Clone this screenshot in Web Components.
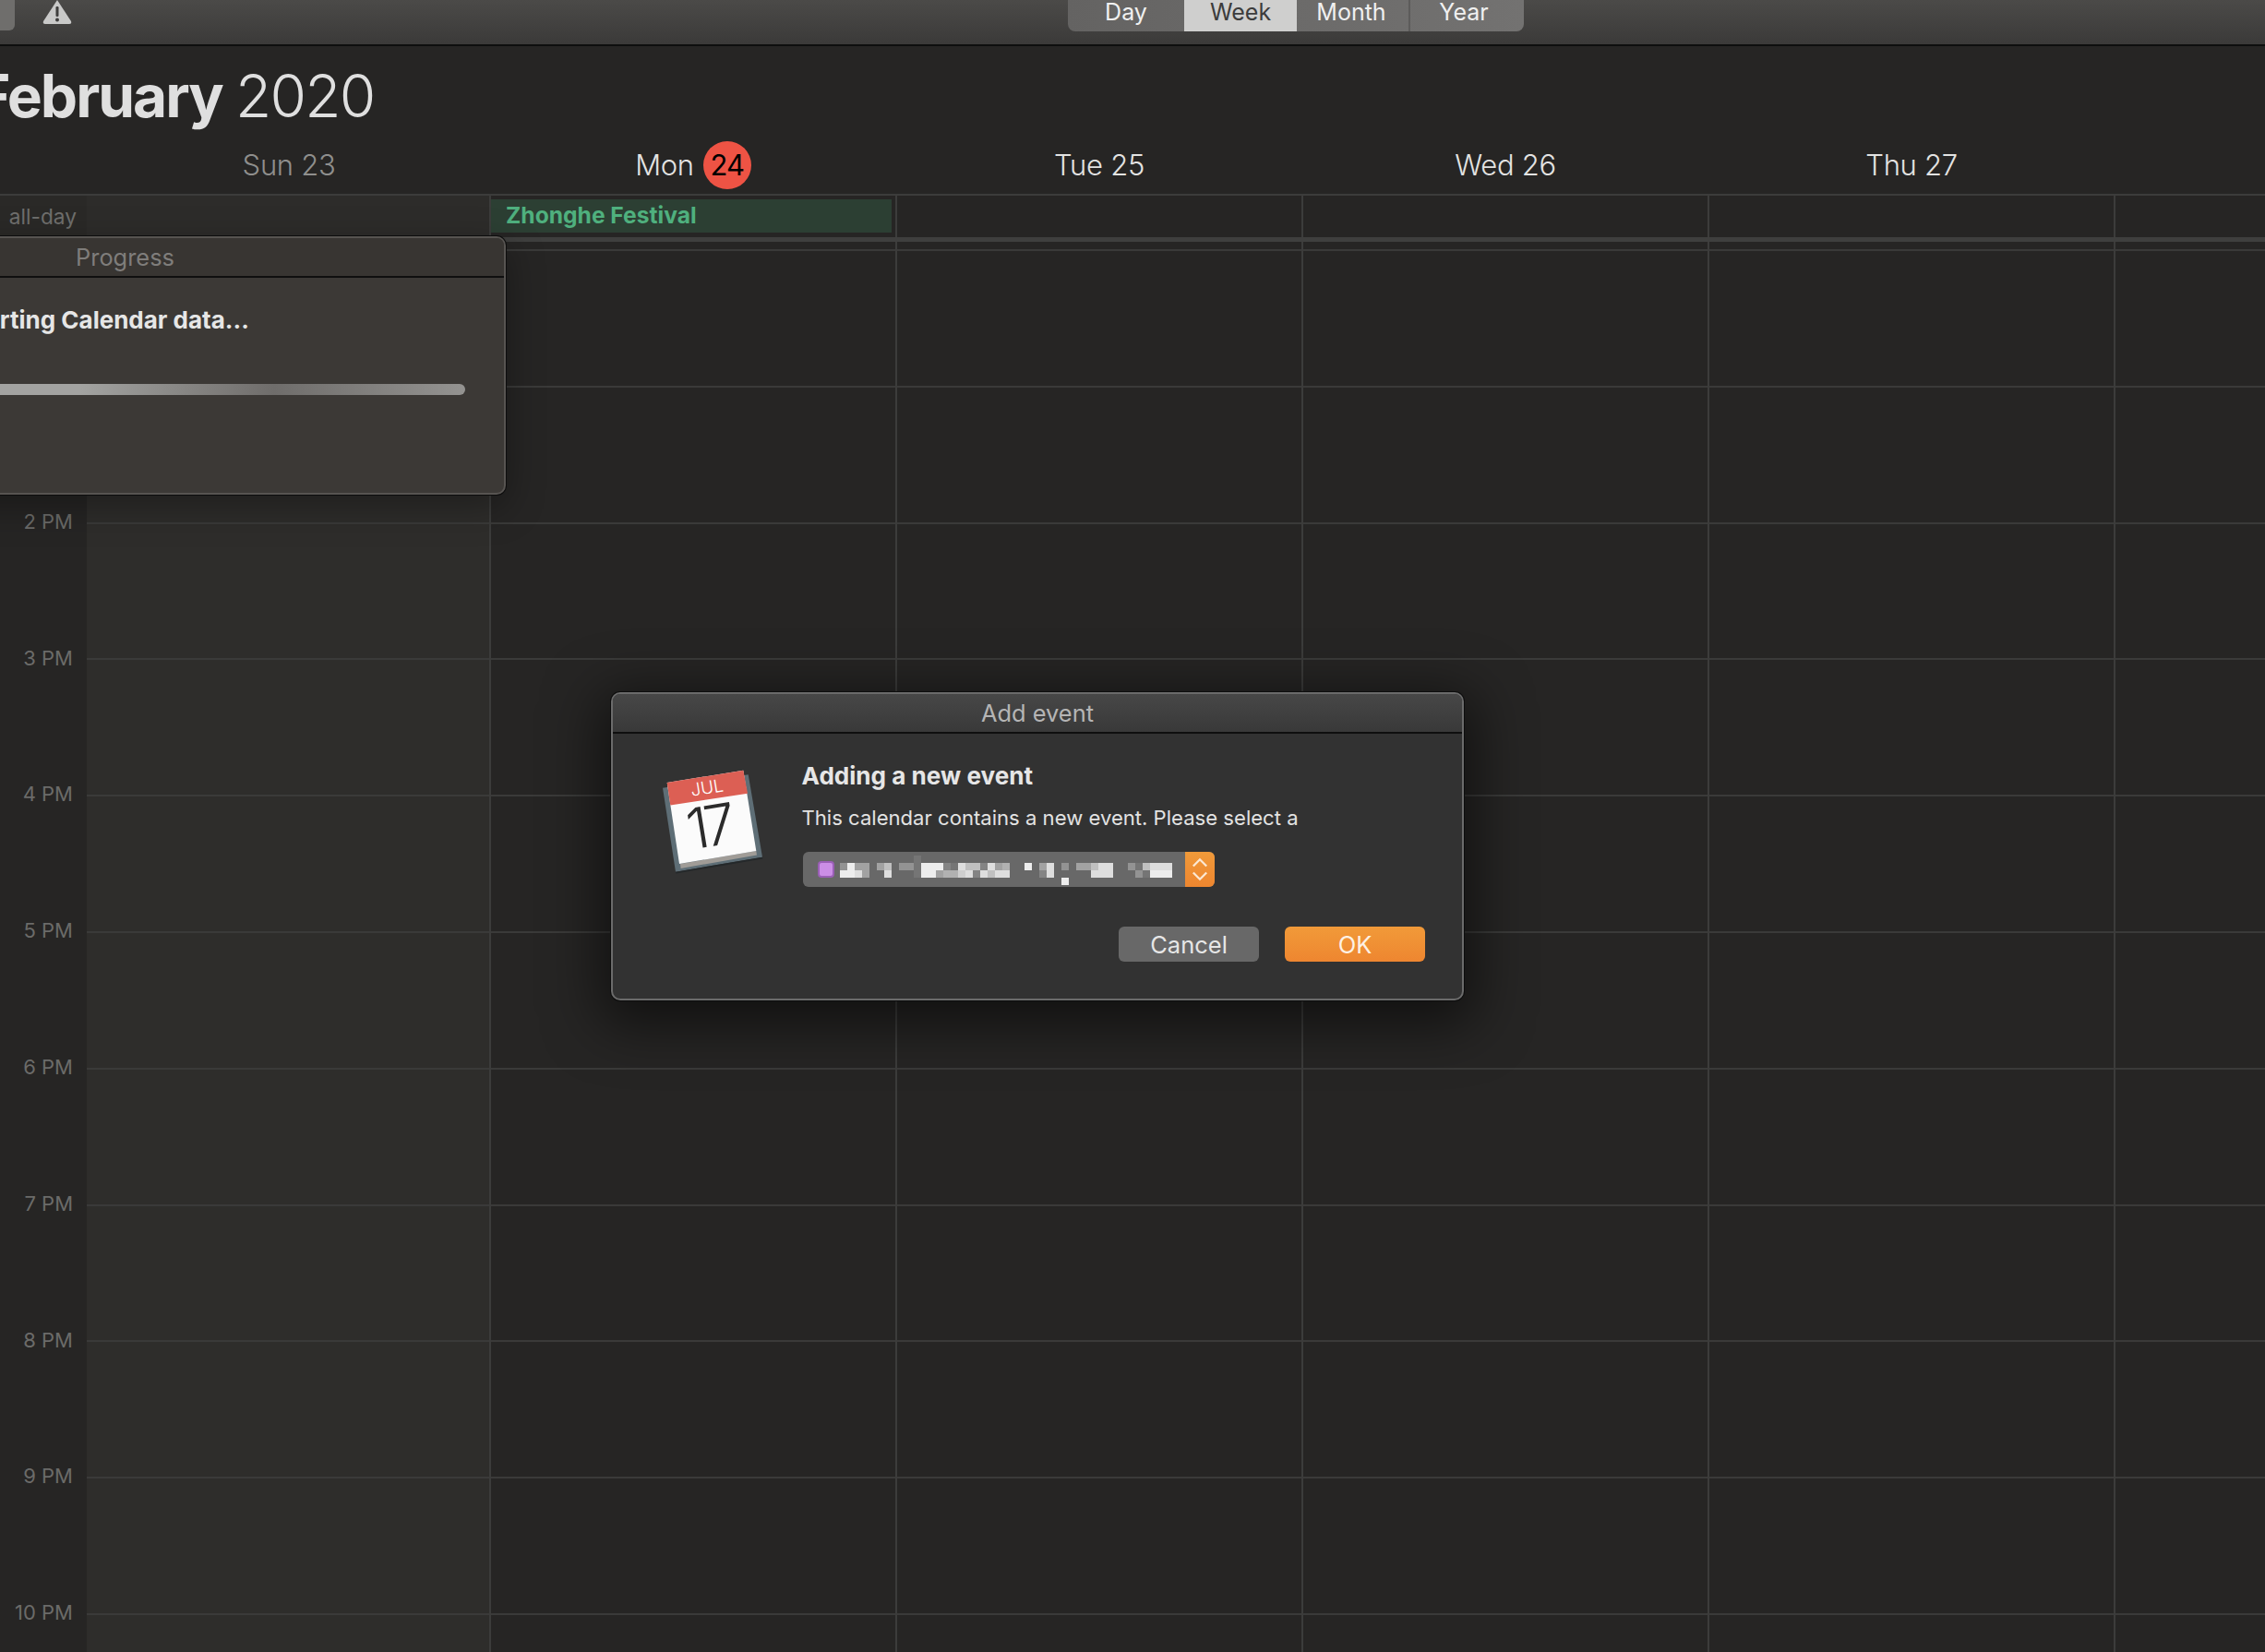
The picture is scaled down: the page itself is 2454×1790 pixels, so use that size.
<!DOCTYPE html>
<html>
<head>
<meta charset="utf-8">
<title>Calendar</title>
<style>
  html, body { margin: 0; height: 1790px; overflow: hidden; background: #262524; }
  body { font-family: Inter, "Liberation Sans", sans-serif; }
</style>
</head>
<body>
<cal-app></cal-app>
<script>
const FONT = `Inter, "Liberation Sans", sans-serif`;
const WEEK_COLUMNS = "94px 436px 440px 440px 440px 440px 1fr";

class CalToolbar extends HTMLElement {
  constructor() {
    super();
    this.attachShadow({ mode: "open" }).innerHTML = `
      <style>
        :host {
          display: flex;
          height: 48px;
          border-bottom: 2px solid #0e0e0e;
          background: linear-gradient(#4b4a48, #3b3a39);
          overflow: hidden;
          font: 400 25px/22px ${FONT};
        }
        .stub { width: 16px; height: 33px; background: #6f6e6c; border-radius: 0 0 6px 0; }
        svg { margin-left: 30px; width: 32px; height: 27px; }
        .views {
          display: flex;
          margin-left: 1079px;
          height: 34px;
          border-radius: 0 0 8px 8px;
          overflow: hidden;
          background: linear-gradient(90deg, #646362, #737271);
        }
        view-tab:nth-child(1) { width: 126px; }
        view-tab:nth-child(2) { width: 122px; }
        view-tab:nth-child(3) { width: 121px; padding-right: 3px; }
        view-tab:nth-child(4) { width: 125px; padding-right: 7px; border-left: 2px solid #5c5b5a; }
      </style>
      <div class="stub"></div>
      <svg viewBox="0 0 32 27"><path d="M16 0 L31 23 Q32 26 29 26 L3 26 Q0 26 1 23 Z" fill="#c9c9c8"/><rect x="14.5" y="7" width="3" height="11" rx="1.2" fill="#3f3e3d"/><circle cx="16" cy="21.6" r="2" fill="#3f3e3d"/></svg>
      <div class="views">
        <view-tab>Day</view-tab>
        <view-tab selected>Week</view-tab>
        <view-tab>Month</view-tab>
        <view-tab>Year</view-tab>
      </div>`;
  }
}

class ViewTab extends HTMLElement {
  constructor() {
    super();
    this.attachShadow({ mode: "open" }).innerHTML = `
      <style>
        :host {
          display: flex;
          justify-content: center;
          padding-top: 2px;
          box-sizing: border-box;
          color: #f0f0f0;
        }
        :host([selected]) { background: #cfcfce; color: #3c3c3c; }
      </style>
      <slot></slot>`;
  }
}

class CalTitle extends HTMLElement {
  constructor() {
    super();
    this.attachShadow({ mode: "open" }).innerHTML = `
      <style>
        :host {
          display: block;
          height: 99px;
          padding: 18px 0 0 0;
          box-sizing: border-box;
          margin-left: -26px;
          font: 300 64px/72px ${FONT};
          letter-spacing: -1.8px;
          word-spacing: -2px;
          color: #dfdfdf;
          white-space: nowrap;
        }
        b { font-weight: 700; letter-spacing: -2px; }
      </style>
      <b>February</b> 2020`;
  }
}

class DayHeaders extends HTMLElement {
  constructor() {
    super();
    this.attachShadow({ mode: "open" }).innerHTML = `
      <style>
        :host {
          display: grid;
          grid-template-columns: ${WEEK_COLUMNS};
          height: 61px;
          border-bottom: 2px solid #3c3c3b;
          font: 300 31px ${FONT};
          letter-spacing: -0.3px;
          color: #e3e3e2;
        }
        div { display: flex; justify-content: center; align-items: center; gap: 10px; padding: 0 0 2px 2px; }
        .off { color: #8f8f8d; }
        .today {
          display: flex; align-items: center; justify-content: center;
          width: 52px; height: 52px; border-radius: 50%;
          background: #ee5344; color: #000;
          font-weight: 400;
          letter-spacing: -1px;
        }
      </style>
      <div></div>
      <div class="off">Sun 23</div>
      <div>Mon <span class="today">24</span></div>
      <div>Tue 25</div>
      <div>Wed 26</div>
      <div>Thu 27</div>
      <div></div>`;
  }
}

class AllDayRow extends HTMLElement {
  constructor() {
    super();
    this.attachShadow({ mode: "open" }).innerHTML = `
      <style>
        :host {
          display: grid;
          grid-template-columns: ${WEEK_COLUMNS};
          height: 45px;
          font: 400 22.7px ${FONT};
        }
        div { border-left: 2px solid #3c3c3b; box-sizing: border-box; }
        .label {
          border: 0;
          display: flex; align-items: center; justify-content: flex-end;
          padding: 0 11px 1px 0;
          background: #2a2927;
          color: #6f6f6d;
        }
        .sun { background: #2d2c2a; border: 0; }
        .event-cell { padding: 4px 4px 5px 0; }
        .event {
          border: 0;
          height: 100%;
          display: flex; align-items: center;
          padding: 0 0 2px 16px;
          background: #2c3f33;
          color: #4fb07e;
          font: 700 24.6px ${FONT};
        }
      </style>
      <div class="label">all-day</div>
      <div class="sun"></div>
      <div class="event-cell"><div class="event">Zhonghe Festival</div></div>
      <div></div><div></div><div></div><div></div>`;
  }
}

class HourLabels extends HTMLElement {
  constructor() {
    super();
    const hours = ["2 PM", "3 PM", "4 PM", "5 PM", "6 PM", "7 PM", "8 PM", "9 PM", "10 PM"];
    this.attachShadow({ mode: "open" }).innerHTML = `
      <style>
        :host {
          display: flex;
          flex-direction: column;
          padding-top: 229px;
          font: 400 22px ${FONT};
          color: #6b6b69;
        }
        div {
          flex: 0 0 147.8px;
          display: flex; align-items: center; justify-content: flex-end;
          padding-right: 15px;
          box-sizing: border-box;
        }
      </style>
      ${hours.map((h) => `<div>${h}</div>`).join("")}`;
  }
}

class DayColumn extends HTMLElement {
  constructor() {
    super();
    this.attachShadow({ mode: "open" }).innerHTML = `
      <style>
        :host {
          display: block;
          box-sizing: border-box;
          background:
            repeating-linear-gradient(#0000 0 8px, #3a3a39 8px 10px, #0000 10px 147.8px),
            var(--col, #262524);
        }
        :host([lined]) { border-left: 2px solid #3c3c3b; }
        :host([weekend]) { --col: #2e2d2b; }
      </style>`;
  }
}

class WeekGrid extends HTMLElement {
  constructor() {
    super();
    this.attachShadow({ mode: "open" }).innerHTML = `
      <style>
        :host {
          display: grid;
          grid-template-columns: ${WEEK_COLUMNS};
          grid-template-rows: 5px 1fr;
          height: 1533px;
        }
        .band {
          grid-column: 1 / -1;
          background: #3f3f3e;
        }
      </style>
      <div class="band"></div>
      <hour-labels></hour-labels>
      <day-column weekend></day-column>
      <day-column lined></day-column>
      <day-column lined></day-column>
      <day-column lined></day-column>
      <day-column lined></day-column>
      <day-column lined></day-column>`;
  }
}

class AppWindow extends HTMLElement {
  constructor() {
    super();
    this.attachShadow({ mode: "open" }).innerHTML = `
      <style>
        :host {
          position: absolute;
          display: flex;
          flex-direction: column;
          box-sizing: border-box;
          border: 2px solid var(--edge, #6b6b6b);
          border-radius: 10px;
          overflow: hidden;
          box-shadow: 0 0 0 1px #0d0d0d, var(--drop, 0 14px 60px 12px rgba(0,0,0,.55));
          background: var(--body, #323232);
        }
        header {
          flex: 0 0 41px;
          border-bottom: 2px solid #0f0f0f;
          display: flex; align-items: center; justify-content: center;
          background: var(--head, linear-gradient(#474747, #393939));
          color: var(--head-text, #b5b5b5);
          font: 400 25.4px ${FONT};
        }
        section { flex: 1; display: flex; min-height: 0; }
      </style>
      <header></header>
      <section><slot></slot></section>`;
  }
  connectedCallback() {
    this.shadowRoot.querySelector("header").textContent = this.getAttribute("heading");
  }
}

class ProgressBody extends HTMLElement {
  constructor() {
    super();
    this.attachShadow({ mode: "open" }).innerHTML = `
      <style>
        :host {
          display: flex;
          flex-direction: column;
          flex: 1;
          padding: 30px 42px 0 211.5px;
        }
        p {
          margin: 0;
          height: 32px;
          font: 700 26px/32px ${FONT};
          color: #e6e6e6;
          white-space: nowrap;
        }
        .bar {
          margin-top: 53px;
          height: 12px;
          border-radius: 0 6px 6px 0;
          background: linear-gradient(90deg, #a3a3a1 0, #a3a3a1 150px, #6f6d6b 360px, #949391 100%);
        }
      </style>
      <p>Importing Calendar data...</p>
      <div class="bar"></div>`;
  }
}

class CalendarIcon extends HTMLElement {
  constructor() {
    super();
    this.attachShadow({ mode: "open" }).innerHTML = `
      <style>
        :host { display: block; width: 140px; height: 140px; }
        svg { display: block; }
        text { font-family: ${FONT}; text-anchor: middle; }
      </style>
      <svg width="140" height="140" viewBox="0 0 140 140">
        <polygon points="18,41.7 110.7,27.3 126,116.7 32,132.7" fill="#5e6e76"/>
        <polygon points="32,132.7 126,116.7 126.4,118.5 32.4,134.5" fill="#24282a"/>
        <polygon points="37,124 119.3,110 120,114.5 37.6,129" fill="#a09c97"/>
        <polygon points="22.7,36 105.3,22.7 119.3,110 36,124" fill="#fbfbfb"/>
        <polygon points="22.7,36 105.3,22.7 110,47.7 26.3,60.5" fill="#dc5f54"/>
        <text transform="translate(67,48) rotate(-9.2)" font-size="19" font-weight="300" fill="#fff">JUL</text>
        <text transform="translate(71.5,105) rotate(-9.2)" font-size="61" font-weight="300" fill="#2b2b2b" letter-spacing="-5">17</text>
      </svg>`;
  }
}

class MosaicText extends HTMLElement {
  constructor() {
    super();
    // one hex digit per 8px cell, "." is a gap: the blurred calendar name
    const rows = [
      "..........7..................................",
      "9faa.ac.997fff87ecc8eab..f.ae.9.aacee..97ceee",
      "ffea..e...7ffabbde8ecee....8e.....eee...97fff",
      "..............................f..............",
    ];
    const cells = rows
      .map((row) =>
        [...row]
          .map((c) => {
            if (c === ".") return "<i></i>";
            const v = parseInt(c, 16) * 15 + 12;
            return `<i style="background:rgb(${v},${v},${v})"></i>`;
          })
          .join("")
      )
      .map((row) => `<div>${row}</div>`)
      .join("");
    this.attachShadow({ mode: "open" }).innerHTML = `
      <style>
        :host { display: block; flex: 0 0 auto; }
        div { display: flex; height: 8px; }
        i { flex: 0 0 8px; height: 8px; }
      </style>
      ${cells}`;
  }
}

class PopupSelect extends HTMLElement {
  constructor() {
    super();
    this.attachShadow({ mode: "open" }).innerHTML = `
      <style>
        :host {
          display: flex;
          width: 446px;
          height: 38px;
          border-radius: 6px;
          overflow: hidden;
          background: #686868;
        }
        .field { flex: 1; min-width: 0; display: flex; align-items: center; padding-left: 16px; gap: 6px; }
        .dot {
          flex: 0 0 18px; height: 18px; box-sizing: border-box;
          border: 2px solid #9a5fb6; border-radius: 4px; background: #cb8ee6;
        }
        mosaic-text { margin-top: 1px; }
        .arrows {
          flex: 0 0 32px;
          display: flex; align-items: center; justify-content: center;
          background: linear-gradient(#f09a3a, #ee862f);
        }
      </style>
      <div class="field"><div class="dot"></div><mosaic-text></mosaic-text></div>
      <div class="arrows">
        <svg width="18" height="28" viewBox="0 0 18 28" fill="none" stroke="#fbe7d2" stroke-width="2.3">
          <path d="M1.8 10.5 L9 3.3 L16.2 10.5"/><path d="M1.8 17.5 L9 24.7 L16.2 17.5"/>
        </svg>
      </div>`;
  }
}

class PushButton extends HTMLElement {
  constructor() {
    super();
    this.attachShadow({ mode: "open" }).innerHTML = `
      <style>
        :host {
          display: flex; align-items: center; justify-content: center;
          width: 152px; height: 38px;
          border-radius: 6px;
          background: #686868;
          color: #e6e6e6;
          font: 400 25.5px ${FONT};
        }
        :host([primary]) { background: linear-gradient(#f19a39, #ee8630); color: #fdf1e4; }
      </style>
      <slot></slot>`;
  }
}

class AddEventBody extends HTMLElement {
  constructor() {
    super();
    this.attachShadow({ mode: "open" }).innerHTML = `
      <style>
        :host { display: flex; flex: 1; padding: 17px 40px 0 36px; }
        calendar-icon { flex: 0 0 168.5px; width: 168.5px; }
        .main { flex: 1; display: flex; flex-direction: column; }
        h2 { margin: 13px 0 0; height: 32px; font: 700 26.1px/32px ${FONT}; color: #e6e6e6; }
        p { margin: 14px 0 0; height: 30px; font: 400 22.1px/30px ${FONT}; color: #e3e3e3; white-space: nowrap; }
        popup-select { margin-top: 22px; margin-left: 1px; }
        .actions { display: flex; justify-content: flex-end; gap: 28px; margin-top: 43px; }
      </style>
      <calendar-icon></calendar-icon>
      <div class="main">
        <h2>Adding a new event</h2>
        <p>This calendar contains a new event. Please select a</p>
        <popup-select></popup-select>
        <div class="actions"><push-button>Cancel</push-button><push-button primary>OK</push-button></div>
      </div>`;
  }
}

class CalApp extends HTMLElement {
  constructor() {
    super();
    this.attachShadow({ mode: "open" }).innerHTML = `
      <style>
        :host { display: block; position: relative; width: 2454px; height: 1790px; overflow: hidden; background: #262524; }
        .progress {
          left: -277px; top: 256px; width: 825px; height: 280px;
          --edge: #575451; --body: #3c3936; --head: #383532; --head-text: #7f7d7b;
          --drop: 0 12px 40px rgba(0,0,0,.35);
        }
        .dialog { left: 662px; top: 750px; width: 924px; height: 334px; }
      </style>
      <cal-toolbar></cal-toolbar>
      <cal-title></cal-title>
      <day-headers></day-headers>
      <all-day-row></all-day-row>
      <week-grid></week-grid>
      <app-window class="progress" heading="Progress"><progress-body></progress-body></app-window>
      <app-window class="dialog" heading="Add event"><add-event-body></add-event-body></app-window>`;
  }
}

customElements.define("view-tab", ViewTab);
customElements.define("cal-toolbar", CalToolbar);
customElements.define("cal-title", CalTitle);
customElements.define("day-headers", DayHeaders);
customElements.define("all-day-row", AllDayRow);
customElements.define("hour-labels", HourLabels);
customElements.define("day-column", DayColumn);
customElements.define("week-grid", WeekGrid);
customElements.define("app-window", AppWindow);
customElements.define("progress-body", ProgressBody);
customElements.define("calendar-icon", CalendarIcon);
customElements.define("mosaic-text", MosaicText);
customElements.define("popup-select", PopupSelect);
customElements.define("push-button", PushButton);
customElements.define("add-event-body", AddEventBody);
customElements.define("cal-app", CalApp);
</script>
</body>
</html>
